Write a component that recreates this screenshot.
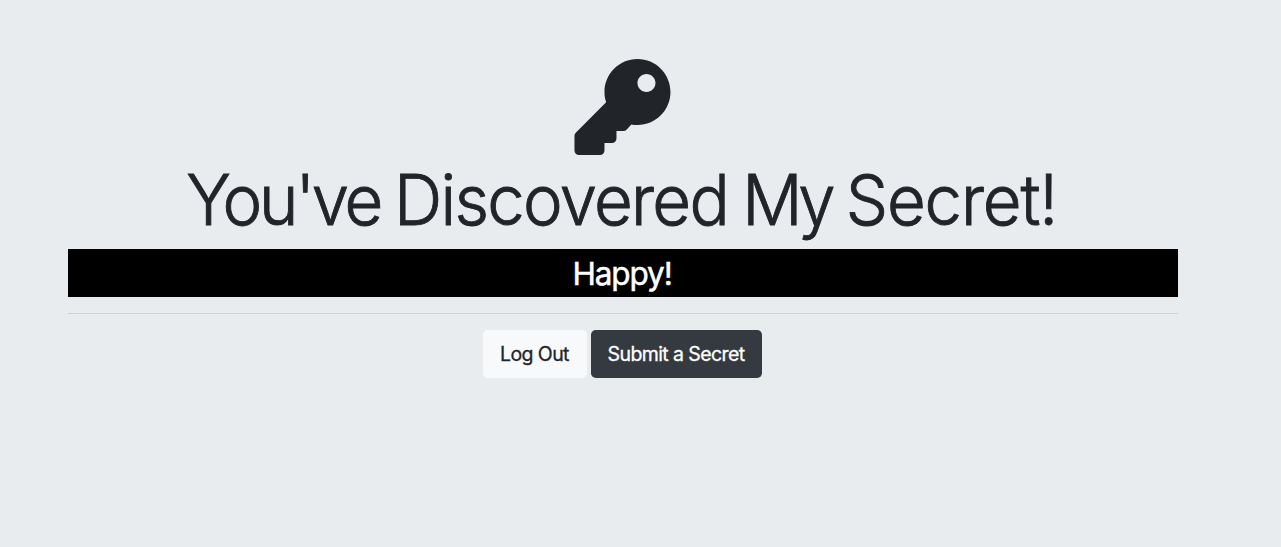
<main class="jumbotron">
  <div class="container">
    <svg class="key" viewBox="-2.5 0 512 512" aria-hidden="true"><path fill="currentColor" d="M512 176.001C512 273.203 433.202 352 336 352c-11.220 0-22.190-1.062-32.827-3.069l-24.012 27.014A23.999 23.999 0 0 1 261.223 384H224v40c0 13.255-10.745 24-24 24h-40v40c0 13.255-10.745 24-24 24H24c-13.255 0-24-10.745-24-24v-78.059c0-6.365 2.529-12.470 7.029-16.971l161.802-161.802C163.108 213.814 160 195.271 160 176 160 78.798 238.797.001 335.999 0 433.488-.001 512 78.511 512 176.001zM336 128c0 26.510 21.490 48 48 48s48-21.490 48-48-21.490-48-48-48-48 21.490-48 48z"/></svg>
    <h1><span class="you">You've</span> <span class="discovered">Discovered</span> <span class="my">My</span> <span class="last">Secret!</span></h1>
    <p class="secret">Happy!</p>
    <hr />
    <div class="actions">
      <a class="btn light" href="#logout">Log Out</a>
      <a class="btn dark" href="#submit">Submit a Secret</a>
    </div>
  </div>
</main>

<style>
  :global(body) { background: #e8ecef; }
  * { box-sizing: border-box; }
  .jumbotron {
    min-height: 547px;
    padding: 59px 103px 0 68px;
    background: #e8ecef;
    color: #212529;
    font-family: Inter, "Liberation Sans", sans-serif;
  }
  .container { display: flex; flex-direction: column; width: 1110px; }
  .key { display: block; overflow: visible; width: 96px; height: 96px; margin-right: 1.2px; align-self: center; }
  h1 {
    height: 86px;
    margin: 3px 0 5px;
    padding-right: 3px;
    font-size: 70.5px;
    font-weight: 300;
    line-height: 83px;
    letter-spacing: -4.3px;
    word-spacing: 2px;
    text-align: center;
    white-space: nowrap;
    transform: scaleX(0.95);
    -webkit-text-stroke: 0.9px currentColor;
  }
  .you { letter-spacing: -3.3px; margin-right: -3px; }
  .discovered { letter-spacing: -1.8px; margin-right: -2.5px; }
  .my { letter-spacing: -4.8px; margin-right: -2px; }
  .last { letter-spacing: -1.2px; }
  .secret {
    height: 48px;
    margin: 0;
    padding-right: 2px;
    background: #000;
    color: #fff;
    font-size: 31.5px;
    font-weight: 400;
    line-height: 50px;
    text-align: center;
    letter-spacing: -1.1px;
    -webkit-text-stroke: 0.5px currentColor;
  }
  hr { width: 100%; height: 1px; margin: 16px 0; border: 0; background: #ced2d5; }
  .actions { display: flex; justify-content: center; gap: 4px; padding-right: 2px; }
  .btn {
    height: 48px;
    border-radius: 4.8px;
    font-size: 19.5px;
    font-weight: 400;
    line-height: 48px;
    text-align: center;
    text-decoration: none;
    letter-spacing: -0.6px;
    white-space: nowrap;
    -webkit-text-stroke: 0.3px currentColor;
  }
  .light { width: 104px; background: #f8f9fa; color: #212529; }
  .dark { width: 171px; background: #343a40; color: #fff; }
</style>
